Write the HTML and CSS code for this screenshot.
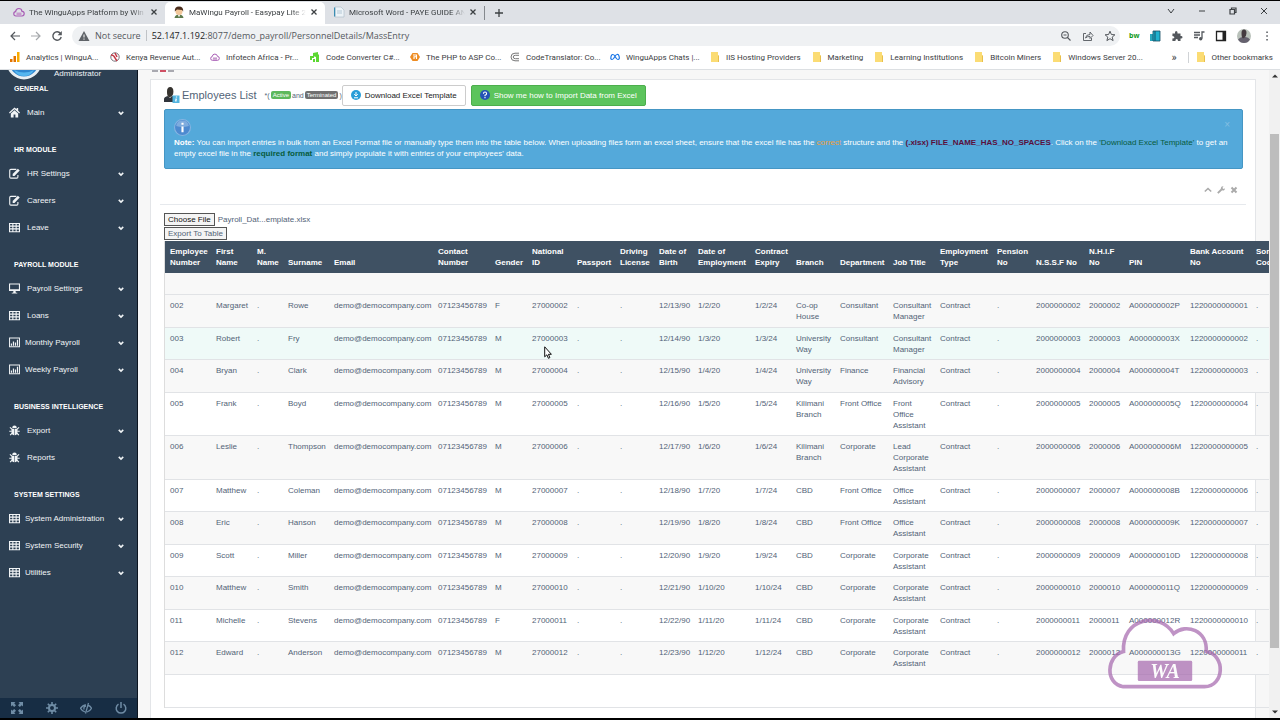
FILE: index.html
```html
<!DOCTYPE html>
<html lang="en">
<head>
  <meta charset="UTF-8" />
  <meta name="viewport" content="width=device-width, initial-scale=1" />
  <title>MaWingu Payroll - Easypay Lite</title>
  <link rel="stylesheet" href="styles.css">
</head>
<body>

<svg class="sprite" aria-hidden="true">
  <symbol id="chevron" viewBox="0 0 8 8"><path d="M1 2.500 4 5.500 7 2.500" fill="none" stroke="currentColor" stroke-width="2"/></symbol>
  <symbol id="home" viewBox="0 0 12 12"><path d="M6 .5 0 6l.9 1L6 2.500 11.100 7l.9-1-2-1.900V1H8.300v1.500zM2 7v4.500h3V8.200h2v3.300h3V7L6 3.500z" fill="currentColor"/></symbol>
  <symbol id="edit" viewBox="0 0 12 12"><path d="M8 1.500H2Q.8 1.500.8 2.700v7Q.8 11 2 11h6.500q1.200 0 1.200-1.200V7.500" fill="none" stroke="currentColor" stroke-width="1.200"/><path d="M4 8.600V6.500L9.700.8l2 2L6 8.600z" fill="currentColor"/></symbol>
  <symbol id="table" viewBox="0 0 12 12"><path d="M.6 1.600h10.800v9H.6zM.6 4.500h10.800M.6 7.500h10.800M4.200 2v8.600M7.800 2v8.600" fill="none" stroke="currentColor" stroke-width="1.200"/></symbol>
  <symbol id="desktop" viewBox="0 0 12 12"><path d="M.6 1.100h10.800v7H.6z" fill="none" stroke="currentColor" stroke-width="1.200"/><path d="M.6 6.800h10.800v1.500H.6zM5 8h2l.5 2.500H9v1H3v-1h1.500z" fill="currentColor"/></symbol>
  <symbol id="chart" viewBox="0 0 12 12"><path d="M.6 1.100h10.800v9.500H.6z" fill="none" stroke="currentColor" stroke-width="1.100"/><path d="M2 7h1.300v2.500H2zM4.200 5h1.300v4.500H4.200zM6.400 6h1.300v3.500H6.400zM8.600 3h1.300v6.500H8.600z" fill="currentColor"/></symbol>
  <symbol id="bug" viewBox="0 0 12 12"><path d="M3.500 3.200Q3.500.6 6 .6t2.500 2.600zM2.700 4h3v7.200Q2.700 11 2.700 8zM6.300 4h3v4q0 3-3 3.200z" fill="currentColor"/><path d="M1 2.500 3.200 4.500M11 2.500 8.800 4.500M.3 6.800H3M11.700 6.800H9M1.200 11 3.300 9M10.800 11 8.700 9" stroke="currentColor" stroke-width="1.200"/></symbol>
  <symbol id="cloud" viewBox="0 0 12 12"><path d="M3 10Q.8 10 .8 7.800T2.600 5.600Q3 2.500 5.800 2.500T9 5.300q2.200 0 2.200 2.300T9 10z" fill="none" stroke="#a85cb5" stroke-width="1.200"/><path d="M3.500 6.500h5v2.800h-5z" fill="#c79acd"/></symbol>
  <symbol id="folder" viewBox="0 0 10 10"><path d="M1 0h7v3l1 1v6H1z" fill="#fbdc74"/><path d="M8 3v7h1V4z" fill="#e8bf4c"/></symbol>
  <symbol id="close" viewBox="0 0 8 8"><path d="m1.500 1.500 5 5m0-5-5 5" stroke="currentColor" stroke-width="1.300"/></symbol>
</svg>

<div class="browser">

  <header class="tabs">
    <div class="tab">
      <svg class="fav"><use href="#cloud"/></svg>
      <span class="tab-title">The WinguApps Platform by Win</span>
      <button class="tab-close" aria-label="Close tab"><svg><use href="#close"/></svg></button>
    </div>
    <div class="tab active">
      <svg class="fav" viewBox="0 0 12 12"><path d="M1.500 12Q2 8.500 6 8.500t4.500 3.500z" fill="#5d7a4c"/><circle cx="6" cy="5.500" r="3.500" fill="#f2c79b"/><path d="M1.800 5.500Q1.500.5 6 .5t4.200 5L9 4 4 3.500z" fill="#4a2c1c"/><path d="m5 9 1 2.500L7 9z" fill="#fff"/></svg>
      <span class="tab-title">MaWingu Payroll - Easypay Lite 2</span>
      <button class="tab-close" aria-label="Close tab"><svg><use href="#close"/></svg></button>
    </div>
    <div class="tab">
      <svg class="fav" viewBox="0 0 12 12"><path d="M2 1h6l3 3v7H2z" fill="#edf3f7" stroke="#a8bac6" stroke-width=".6"/><path d="M1 1.500h1.200v9H1z" fill="#398db3"/><path d="M4 5h5M4 7h5" stroke="#9bb6c5" stroke-width=".7"/></svg>
      <span class="tab-title">Microsoft Word - PAYE GUIDE AN</span>
      <button class="tab-close" aria-label="Close tab"><svg><use href="#close"/></svg></button>
    </div>
    <button class="new-tab" aria-label="New tab"><svg viewBox="0 0 10 10"><path d="M5 1v8M1 5h8" stroke="currentColor" stroke-width="1.300"/></svg></button>
    <div class="window-buttons">
      <button aria-label="Search tabs"><svg viewBox="0 0 10 10"><path d="m2 3 3 4 3-4" fill="none" stroke="currentColor"/></svg></button>
      <button aria-label="Minimize"><svg viewBox="0 0 10 10"><path d="M2 5h6" stroke="currentColor"/></svg></button>
      <button aria-label="Restore"><svg viewBox="0 0 10 10"><path d="M2 3.500h4.500V8H2zM3.500 3V2H8v4.500H7" fill="none" stroke="currentColor" stroke-width="1.200"/></svg></button>
      <button aria-label="Close"><svg viewBox="0 0 10 10"><path d="m2 2 6 6m0-6L2 8" stroke="currentColor"/></svg></button>
    </div>
  </header>

  <div class="toolbar">
    <button aria-label="Back"><svg viewBox="0 0 12 12"><path d="M11 6H2M6 2 2 6l4 4" fill="none" stroke="currentColor" stroke-width="1.200"/></svg></button>
    <button class="dim" aria-label="Forward"><svg viewBox="0 0 12 12"><path d="M1 6h9M6 2l4 4-4 4" fill="none" stroke="currentColor" stroke-width="1.200"/></svg></button>
    <button aria-label="Reload"><svg viewBox="0 0 12 12"><path d="M9.500 3.500A4.200 4.200 0 1 0 10.200 7" fill="none" stroke="currentColor" stroke-width="1.400"/><path d="M10.800 1v4.200H6.600z" fill="currentColor"/></svg></button>
    <div class="omnibox">
      <svg class="warn" viewBox="0 0 12 12"><path d="M6 1 11.500 11H.5z" fill="#5f6368"/><path d="M6 4.500v3M6 8.500v1.200" stroke="#fff"/></svg>
      <span class="not-secure">Not secure</span>
      <span class="url"><b>52.147.1.192</b>:8077/demo_payroll/PersonnelDetails/MassEntry</span>
      <div class="omni-actions">
        <svg viewBox="0 0 12 12"><circle cx="5" cy="5" r="3.300" fill="none" stroke="currentColor" stroke-width="1.100"/><path d="m7.500 7.500 3 3M3.500 5h3" stroke="currentColor" stroke-width="1.100"/></svg>
        <svg viewBox="0 0 12 12"><path d="M4 3.500H1.500v7h8V8M3.500 8Q4 4.500 8 4.500V2l3 3.500-3 3v-2Q5 6.300 3.500 8z" fill="none" stroke="currentColor" stroke-width=".9"/></svg>
        <svg viewBox="0 0 12 12"><path d="m6 1.200 1.400 3.300 3.500.3-2.700 2.300.9 3.500L6 8.700l-3.100 1.900.9-3.500L1.100 4.800l3.500-.3z" fill="none" stroke="currentColor"/></svg>
      </div>
    </div>
    <div class="extensions">
      <span class="bw">bw</span>
      <svg viewBox="0 0 12 12"><path d="M1 4h4v7H1z" fill="#2aa7bd"/><path d="M4 1h7v10H4z" fill="#20b1ce" stroke="#174c62" stroke-width=".8"/><path d="M6 1v10" stroke="#134f66"/></svg>
      <svg viewBox="0 0 12 12"><path d="M1.500 3.500H4Q3.500 1 5.200 1T6.500 3.500h3V6q2-.3 2 1.200T9.500 8.500V11H7Q7 9 5.700 9T4.400 11h-3V8.500q2-.1 2-1.300t-2-1.300z" fill="currentColor"/></svg>
      <svg viewBox="0 0 12 12"><path d="M1 2.500h6M1 5h6M1 7.500h4M9 8.500V2h2.500" fill="none" stroke="currentColor" stroke-width="1.300"/><circle cx="7.700" cy="8.700" r="1.700" fill="currentColor"/></svg>
      <svg viewBox="0 0 12 12"><path d="M1.500 1.500h9v9h-9z" fill="none" stroke="#222" stroke-width="1.300"/><path d="M7.500 1.500h3v9h-3z" fill="#222"/></svg>
      <svg class="account" viewBox="0 0 14 14"><circle cx="7" cy="7" r="7" fill="#b9c1ba"/><path d="M1 10.500Q3 8 5.500 8h3q3 0 4.500 2.500-2 3.500-6 3.500t-6-3.500z" fill="#65616e"/><path d="M4.500 4q0-3.500 2.500-3.500T9.500 4 7 9 4.500 4z" fill="#443a3f"/></svg>
      <svg viewBox="0 0 12 12"><path d="M5.300 1.500h1.500V3H5.300zM5.300 5.200h1.500v1.500H5.300zM5.300 9h1.500v1.500H5.300z" fill="currentColor"/></svg>
    </div>
  </div>

  <nav class="bookmarks">
    <a href="#" class="site"><svg viewBox="0 0 10 10"><path d="M0 7h2.500v3H0z" fill="#e37400"/><path d="M3.500 4H6v6H3.500z" fill="#e37400"/><path d="M7 0h2.500v10H7z" fill="#f9ab00"/></svg>Analytics | WinguA...</a>
    <a href="#" class="site"><svg viewBox="0 0 10 10"><circle cx="5" cy="5" r="4.200" fill="#fff" stroke="#77747c"/><path d="M1 3q3 0 4 3l2 3M5 1l2 4" fill="none" stroke="#c23a46" stroke-width="1.500"/></svg>Kenya Revenue Aut...</a>
    <a href="#" class="site"><svg><use href="#cloud"/></svg>Infotech Africa - Pr...</a>
    <a href="#" class="site"><svg viewBox="0 0 10 10"><path d="M0 4h4v2H2v2H0zM3 1l5-1v2l1 1v7H6V5L3 4z" fill="#5cd832"/><path d="M3 7h2v3H3z" fill="#5cd832"/></svg>Code Converter C#...</a>
    <a href="#" class="site"><svg viewBox="0 0 10 10"><path d="M2.500 1h5L10 5 7.500 9h-5L0 5z" fill="#ee8c22"/><path d="M3 3h3.500v1.700H4V7M6.500 5v2" fill="none" stroke="#fff" stroke-width="1.100"/></svg>The PHP to ASP Co...</a>
    <a href="#" class="site"><svg viewBox="0 0 10 10"><path d="M9 1.200H5Q1 1.200 1 5t4 3.800h4M9 3.300H5.500Q3.200 3.300 3.200 5t2.300 1.700H9" fill="none" stroke="#777"/></svg>CodeTranslator: Co...</a>
    <a href="#" class="site"><svg viewBox="0 0 12 10"><path d="M1 7.500Q.8 2 3.500 2 5 2 6.500 5T9.500 8q2.300 0 1.500-3.500T8.500 2Q7 2 5.500 5T2.500 8Q1.200 8 1 7" fill="none" stroke="#1673e6" stroke-width="1.400"/></svg>WinguApps Chats |...</a>
    <a href="#"><svg><use href="#folder"/></svg>IIS Hosting Providers</a>
    <a href="#"><svg><use href="#folder"/></svg>Marketing</a>
    <a href="#"><svg><use href="#folder"/></svg>Learning Institutions</a>
    <a href="#"><svg><use href="#folder"/></svg>Bitcoin Miners</a>
    <a href="#"><svg><use href="#folder"/></svg>Windows Server 20...</a>
    <button class="more">»</button>
    <a href="#" class="other"><svg><use href="#folder"/></svg>Other bookmarks</a>
  </nav>

  <div class="page">

    <aside class="sidebar">
      <div class="profile">
        <svg viewBox="0 0 34 12"><circle cx="17" cy="-8" r="16" fill="#2f86cf" stroke="#e9eff3" stroke-width="3"/><path d="M7 0q10 5 20 0-3 6-10 6T7 0z" fill="#55b6ef"/></svg>
        <span>Administrator</span>
      </div>
      <div class="menu">
        <h3>GENERAL</h3>
        <a href="#"><svg><use href="#home"/></svg>Main<svg class="arrow"><use href="#chevron"/></svg></a>
      </div>
      <div class="menu">
        <h3>HR MODULE</h3>
        <a href="#"><svg><use href="#edit"/></svg>HR Settings<svg class="arrow"><use href="#chevron"/></svg></a>
        <a href="#"><svg><use href="#edit"/></svg>Careers<svg class="arrow"><use href="#chevron"/></svg></a>
        <a href="#"><svg><use href="#table"/></svg>Leave<svg class="arrow"><use href="#chevron"/></svg></a>
      </div>
      <div class="menu">
        <h3>PAYROLL MODULE</h3>
        <a href="#"><svg><use href="#desktop"/></svg>Payroll Settings<svg class="arrow"><use href="#chevron"/></svg></a>
        <a href="#"><svg><use href="#table"/></svg>Loans<svg class="arrow"><use href="#chevron"/></svg></a>
        <a href="#" class="tight"><svg><use href="#chart"/></svg>Monthly Payroll<svg class="arrow"><use href="#chevron"/></svg></a>
        <a href="#" class="tight"><svg><use href="#chart"/></svg>Weekly Payroll<svg class="arrow"><use href="#chevron"/></svg></a>
      </div>
      <div class="menu">
        <h3>BUSINESS INTELLIGENCE</h3>
        <a href="#"><svg><use href="#bug"/></svg>Export<svg class="arrow"><use href="#chevron"/></svg></a>
        <a href="#"><svg><use href="#bug"/></svg>Reports<svg class="arrow"><use href="#chevron"/></svg></a>
      </div>
      <div class="menu">
        <h3>SYSTEM SETTINGS</h3>
        <a href="#" class="tight"><svg><use href="#table"/></svg>System Administration<svg class="arrow"><use href="#chevron"/></svg></a>
        <a href="#" class="tight"><svg><use href="#table"/></svg>System Security<svg class="arrow"><use href="#chevron"/></svg></a>
        <a href="#" class="tight"><svg><use href="#table"/></svg>Utilities<svg class="arrow"><use href="#chevron"/></svg></a>
      </div>
      <div class="sidebar-footer">
        <button aria-label="Full screen"><svg viewBox="0 0 12 12"><path d="M0 0h4.500L3.200 1.300 5 3.200 3.200 5 1.300 3.200 0 4.500zM12 0v4.500l-1.300-1.300L8.800 5 7 3.200l1.800-1.900L7.500 0zM0 12V7.500l1.300 1.300L3.200 7 5 8.800l-1.800 1.900L4.500 12zM12 12H7.500l1.300-1.300L7 8.800 8.800 7l1.900 1.800L12 7.500z" fill="currentColor"/></svg></button>
        <button aria-label="Settings"><svg viewBox="0 0 12 12"><circle cx="6" cy="6" r="3" fill="none" stroke="currentColor" stroke-width="2"/><path d="M6 0v3M6 9v3M0 6h3M9 6h3M1.800 1.800l2 2M8.200 8.200l2 2M10.200 1.800l-2 2M3.800 8.200l-2 2" stroke="currentColor" stroke-width="1.600"/></svg></button>
        <button aria-label="Hide"><svg viewBox="0 0 12 12"><path d="M5 10Q2 9 .5 6.300 2.500 3 6 2.800M8 3.200q2.500 1 3.500 3Q10 9 7 10M8.500 1 5.500 11.500M6 4q-2.500 0-2 3.500" fill="none" stroke="currentColor" stroke-width="1.300"/></svg></button>
        <button aria-label="Logout"><svg viewBox="0 0 12 12"><path d="M3.500 2.200a4.800 4.800 0 1 0 5 0M6 0v6" fill="none" stroke="currentColor" stroke-width="1.500"/></svg></button>
      </div>
    </aside>

    <main class="content">
      <div class="crumb"><i></i><i class="red"></i><i></i></div>
      <section class="panel">
        <div class="title-row">
          <svg class="user-icon" viewBox="0 0 16 16"><path d="M0 15V12q0-2 4-3l2 2 2-2q4 1 4 3v3z" fill="#30343b"/><path d="M3 4.500Q3 0 6.200 0t3.200 4.500T6.200 10 3 4.500z" fill="#36332f"/><path d="M8.500 8.500h7V16h-7z" fill="#53b4df"/><path d="M12.500 9.500v1M12.300 11.500l-.6 3" stroke="#fff" stroke-width="1.300"/></svg>
          <h2>Employees List</h2>
          <small>*(<span class="badge green">Active</span> and <span class="badge grey">Terminated</span>)</small>
          <button class="btn"><svg viewBox="0 0 10 10"><circle cx="5" cy="5" r="5" fill="#299dd8"/><path d="M5 2v3M3.200 4.200 5 6l1.800-1.800M3 7.800h4" fill="none" stroke="#fff"/></svg>Download Excel Template</button>
          <button class="btn btn-success"><svg viewBox="0 0 10 10"><circle cx="5" cy="5" r="5" fill="#2453b5"/><path d="M3.400 3.700Q3.500 2 5 2t1.600 1.500T5 5.300v.9M5 7v1.200" fill="none" stroke="#fff" stroke-width="1.100"/></svg>Show me how to Import Data from Excel</button>
        </div>

        <div class="alert">
          <button class="dismiss" aria-label="Close">×</button>
          <svg class="info" viewBox="0 0 16 16"><circle cx="8" cy="8" r="7.500" fill="#4d8ad0" stroke="#86b5e2"/><path d="M2 6.500Q3 1.500 8 1.500t6 5q-6 2-12 0z" fill="#7facde"/><path d="M7 7h2v5.500H7zM7 3.500h2v2H7z" fill="#fff"/></svg>
          <p><strong>Note:</strong> You can import entries in bulk from an Excel Format file or manually type them into the table below. When uploading files form an excel sheet, ensure that the excel file has the <span class="orange">correct</span> structure and the <b class="maroon">(.xlsx) FILE_NAME_HAS_NO_SPACES</b>. Click on the <span class="green-text">'Download Excel Template'</span> to get an empty excel file in the <b class="green-text">required format</b> and simply populate it with entries of your employees' data.</p>
        </div>

        <div class="toolbox">
          <button aria-label="Collapse"><svg viewBox="0 0 8 8"><path d="M.8 5.500 4 2.500l3.200 3" fill="none" stroke="currentColor" stroke-width="1.600"/></svg></button>
          <button aria-label="Options"><svg viewBox="0 0 8 8"><path d="M.8 7.200 4.500 3.500" stroke="currentColor" stroke-width="1.800"/><path d="M6.500.3Q4 0 3.800 2.500t3 2Q8 4 7.800 2.300L6.500 3 5.400 2z" fill="currentColor"/></svg></button>
          <button aria-label="Close"><svg viewBox="0 0 8 8"><path d="m1.500 1.500 5 5m0-5-5 5" stroke="currentColor" stroke-width="2"/></svg></button>
        </div>

        <form class="upload" onsubmit="return false">
          <div class="file-row">
            <button type="button" class="choose" id="chooseFile">Choose File</button>
            <label for="chooseFile">Payroll_Dat...emplate.xlsx</label>
          </div>
          <button type="button" class="export">Export To Table</button>
        </form>

        <table class="employees">
          <colgroup id="employeesCols"></colgroup>
          <thead><tr id="employeesHead"></tr></thead>
          <tbody id="employeesBody"></tbody>
        </table>
      </section>

      <svg class="watermark" viewBox="82 48 348 220">
        <path d="M130 258H375C435 258 440 162 380 152 385 90 320 65 282 98 240 30 125 50 131 152 78 165 75 250 130 258z" fill="none" stroke="#a566ad" stroke-width="11"/>
        <rect x="174" y="180" width="164" height="61" rx="4" fill="#a566ad"/>
        <text x="256" y="231" text-anchor="middle">WA</text>
      </svg>
    </main>

    <div class="scrollbar">
      <svg viewBox="0 0 8 8"><path d="m1 5.500 3-3 3 3z"/></svg>
      <div class="thumb"></div>
      <svg viewBox="0 0 8 8"><path d="m1 2.500 3 3 3-3z"/></svg>
    </div>
  </div>
</div>

<svg class="pointer" viewBox="0 0 8 13"><path d="M.7.8v10l2.200-2 1.500 3.500 1.500-.7-1.500-3.300h3z" fill="#fff" stroke="#111"/></svg>

<script>
  const columns = [
    ['Employee Number', 46], ['First Name', 41], ['M. Name', 31], ['Surname', 46], ['Email', 104],
    ['Contact Number', 57], ['Gender', 37], ['National ID', 45], ['Passport', 43], ['Driving License', 39],
    ['Date of Birth', 39], ['Date of Employment', 57], ['Contract Expiry', 41], ['Branch', 44],
    ['Department', 53], ['Job Title', 47], ['Employment Type', 57], ['Pension No', 39], ['N.S.S.F No', 53],
    ['N.H.I.F No', 40], ['PIN', 61], ['Bank Account No', 66], ['Sort Code', 40]
  ];

  const employees = [
    ['Margaret', 'Rowe', 'F', 'Co-op House', 'Consultant', 'Consultant Manager', 'P'],
    ['Robert', 'Fry', 'M', 'University Way', 'Consultant', 'Consultant Manager', 'X'],
    ['Bryan', 'Clark', 'M', 'University Way', 'Finance', 'Financial Advisory', 'T'],
    ['Frank', 'Boyd', 'M', 'Kilimani Branch', 'Front Office', 'Front Office Assistant', 'Q'],
    ['Leslie', 'Thompson', 'M', 'Kilimani Branch', 'Corporate', 'Lead Corporate Assistant', 'M'],
    ['Matthew', 'Coleman', 'M', 'CBD', 'Front Office', 'Office Assistant', 'B'],
    ['Eric', 'Hanson', 'M', 'CBD', 'Front Office', 'Office Assistant', 'K'],
    ['Scott', 'Miller', 'M', 'CBD', 'Corporate', 'Corporate Assistant', 'D'],
    ['Matthew', 'Smith', 'M', 'CBD', 'Corporate', 'Corporate Assistant', 'Q'],
    ['Michelle', 'Stevens', 'F', 'CBD', 'Corporate', 'Corporate Assistant', 'R'],
    ['Edward', 'Anderson', 'M', 'CBD', 'Corporate', 'Corporate Assistant', 'G']
  ];

  const twoDigits = n => String(n).padStart(2, '0');

  document.getElementById('employeesCols').innerHTML = columns.map(c => `<col style="width:${c[1]}px">`).join('');
  document.getElementById('employeesHead').innerHTML = columns.map(c => `<th>${c[0]}</th>`).join('');

  const tbody = document.getElementById('employeesBody');
  tbody.innerHTML = `<tr class="blank"><td colspan="${columns.length}"></td></tr>`;

  employees.forEach((e, i) => {
    const n = i + 2;
    const no = twoDigits(n);
    // PIN numbers skip 007
    const pin = twoDigits(n > 6 ? n + 1 : n);
    const cells = [
      '0' + no, e[0], '.', e[1], 'demo@democompany.com', '07123456789', e[2], '270000' + no, '.', '.',
      `12/${n + 11}/90`, `1/${n}/20`, `1/${n}/24`, e[3], e[4], e[5], 'Contract', '.',
      '20000000' + no, '20000' + no, 'A0000000' + pin + e[6], '12200000000' + twoDigits(n - 1), '.'
    ];
    const tr = document.createElement('tr');
    if (n === 3) tr.className = 'hovered';
    tr.innerHTML = cells.map(c => `<td>${c}</td>`).join('');
    tbody.appendChild(tr);
  });
  tbody.insertAdjacentHTML('beforeend', `<tr class="last"><td colspan="${columns.length}"></td></tr>`);
</script>

</body>
</html>
```

FILE: styles.css
```css
* {
  box-sizing: border-box;
}
body {
  margin: 0;
  font-family: "Liberation Sans", Arial, sans-serif;
  font-size: 8px;
  line-height: 11px;
  color: #526377;
  background: #000;
}
button {
  margin: 0;
  padding: 0;
  border: 0;
  background: none;
  font: inherit;
  color: inherit;
  cursor: pointer;
}
a {
  color: inherit;
  text-decoration: none;
}
svg {
  display: block;
  flex: none;
}
.sprite {
  position: absolute;
  width: 0;
  height: 0;
}
.browser {
  display: flex;
  flex-direction: column;
  height: 100vh;
  padding: 1px 0 2px;
}

/* browser chrome */
.tabs {
  display: flex;
  align-items: flex-end;
  height: 23px;
  flex: none;
  background: #dee1e6;
  font-family: Roboto, "Noto Sans", sans-serif;
  color: #3c4043;
}
.tab {
  display: flex;
  align-items: center;
  width: 160px;
  height: 22px;
  padding: 0 7px 2px 8px;
  gap: 4px;
}
.tab:first-child {
  width: 165px;
  padding-left: 13px;
}
.tab:nth-child(3) {
  border-right: 1px solid transparent;
  border-image: linear-gradient(transparent 20%, #85898e 20%, #85898e 80%, transparent 80%) 1;
}
.tab.active {
  background: #fff;
  border-radius: 5px 5px 0 0;
}
.fav {
  width: 12px;
  height: 12px;
}
.tab-title {
  flex: 1;
  overflow: hidden;
  white-space: nowrap;
  -webkit-mask-image: linear-gradient(90deg, #000 88%, transparent);
  mask-image: linear-gradient(90deg, #000 88%, transparent);
}
.tab-close svg {
  width: 8px;
  height: 8px;
}
.new-tab {
  align-self: center;
  margin-left: 9px;
}
.new-tab svg,
.window-buttons svg {
  width: 10px;
  height: 10px;
}
.window-buttons {
  display: flex;
  align-self: center;
  gap: 21px;
  margin-left: auto;
  padding: 0 11px 3px 0;
}
.toolbar {
  display: flex;
  align-items: center;
  gap: 9px;
  height: 23px;
  flex: none;
  padding: 0 7px 0 9px;
  background: #fff;
  color: #54585d;
  font-family: "Open Sans", "Noto Sans", sans-serif;
  font-size: 9px;
}
.toolbar svg {
  width: 12px;
  height: 12px;
}
.toolbar .dim {
  color: #a5a8ab;
}
.omnibox {
  display: flex;
  flex: 1;
  align-items: center;
  gap: 5px;
  height: 20px;
  padding: 0 4px 0 6px;
  border-radius: 10px;
  background: #eff1f3;
}
.not-secure {
  padding-right: 5px;
  border-right: 1px solid #c0c3c7;
}
.url b {
  font-weight: normal;
  color: #202124;
}
.omni-actions {
  display: flex;
  gap: 10px;
  margin-left: auto;
}
.extensions {
  display: flex;
  align-items: center;
  gap: 10px;
}
.extensions .account {
  width: 14px;
  height: 14px;
}
.bw {
  width: 10px;
  font-weight: bold;
  font-size: 7px;
  color: #129a18;
}
.bookmarks {
  display: flex;
  align-items: center;
  gap: 11px;
  height: 23px;
  flex: none;
  padding: 0 7px 2px 10px;
  border-bottom: 1px solid #dcdfe2;
  background: #fff;
  color: #3c4043;
  font-family: Roboto, "Noto Sans", sans-serif;
  white-space: nowrap;
}
.bookmarks a {
  display: flex;
  align-items: center;
  gap: 6px;
}
.bookmarks .site {
  width: 89px;
}
.bookmarks svg {
  width: 10px;
  height: 10px;
}
.bookmarks .more {
  margin-left: auto;
  font-size: 11px;
}
.bookmarks .other {
  padding-left: 7px;
  border-left: 1px solid #d0d3d6;
}

/* page */
.page {
  display: flex;
  flex: 1;
  min-height: 0;
  background: #f7f7f7;
}
.sidebar {
  display: flex;
  flex-direction: column;
  width: 138px;
  flex: none;
  overflow: hidden;
  border-right: 1px solid #0c1520;
  background: #2d4053;
  color: #f1f4f6;
}
.profile {
  display: flex;
  height: 13px;
  padding-left: 7px;
  gap: 13px;
  line-height: 8px;
}
.profile svg {
  width: 34px;
  height: 12px;
}
.menu {
  margin-bottom: 18px;
}
.menu h3 {
  margin: 0 0 4px;
  padding-left: 14px;
  font-size: 7px;
  line-height: 12px;
  color: #fff;
}
.menu a {
  display: flex;
  align-items: center;
  gap: 7px;
  height: 27px;
  padding: 0 13px 0 9px;
}
.menu a.tight {
  gap: 5px;
}
.menu svg {
  width: 11px;
  height: 11px;
}
.menu .arrow {
  width: 6px;
  height: 6px;
  margin-left: auto;
}
.sidebar-footer {
  display: flex;
  align-items: center;
  justify-content: space-between;
  height: 20px;
  margin-top: auto;
  padding: 0 10px 0 11px;
  background: #172d44;
  color: #6f8ca5;
}
.sidebar-footer svg {
  width: 12px;
  height: 12px;
}
.content {
  position: relative;
  flex: 1;
  min-width: 0;
  overflow: hidden;
  padding: 0 13px 0 12px;
}
.crumb {
  display: flex;
  gap: 2px;
  height: 9px;
  padding-left: 2px;
}
.crumb i {
  width: 6px;
  height: 2px;
  background: #a9a9b0;
}
.crumb .red {
  background: #cf5064;
}
.panel {
  height: 100%;
  padding: 4px 12px 0 13px;
  border: 1px solid #e3e5e8;
  background: #fff;
}
.title-row {
  display: flex;
  align-items: center;
  height: 22px;
}
.user-icon {
  width: 16px;
  height: 16px;
}
h2 {
  margin: 0 8px 0 2px;
  font-size: 11px;
  line-height: 14px;
  font-weight: normal;
}
.title-row small {
  display: flex;
  align-items: center;
  gap: 1px;
  font-size: 7px;
}
.badge {
  padding: 0 2px;
  border-radius: 2px;
  line-height: 8px;
  font-size: 6px;
  color: #fff;
}
.badge.green {
  background: #5cb85c;
}
.badge.grey {
  background: #707070;
}
.btn {
  display: flex;
  align-items: center;
  gap: 4px;
  height: 21px;
  margin-right: 5px;
  padding: 0 8px;
  border: 1px solid #ccc;
  border-radius: 2px;
  background: #fff;
  color: #222;
}
.btn svg {
  width: 10px;
  height: 10px;
}
.btn-success {
  border-color: #4cae4c;
  background: #5cc45c;
  color: #fff;
}
.alert {
  position: relative;
  margin-top: 3px;
  padding: 9px;
  border: 1px solid #4596c4;
  border-radius: 2px;
  background: #54a9da;
  color: #fff;
}
.alert p {
  margin: 0;
}
.info {
  width: 17px;
  height: 17px;
  margin-bottom: 1px;
}
.dismiss {
  position: absolute;
  top: 9px;
  right: 12px;
  font-size: 10px;
  color: #83bfe2;
}
.orange {
  color: #f0a03c;
}
.maroon {
  color: #5a0f3c;
}
.green-text {
  color: #085b3c;
}
.toolbox {
  display: flex;
  align-items: center;
  justify-content: flex-end;
  gap: 5px;
  height: 36px;
  margin: 0 -3px 0 -4px;
  padding: 7px 8px 0 0;
  border-bottom: 1px solid #e6e9ed;
  color: #aaa;
}
.toolbox svg {
  width: 8px;
  height: 8px;
}
.upload {
  padding: 8px 0 1px;
}
.file-row {
  display: flex;
  gap: 3px;
  align-items: center;
  margin-bottom: 1px;
}
.choose,
.export {
  display: block;
  height: 13px;
  padding: 0 3px;
  border: 1px solid #555;
  background: #f4f4f4;
}
.choose {
  color: #111;
}
.employees {
  width: 1126px;
  border-collapse: separate;
  border-spacing: 0;
  border-left: 1px solid #ddd;
  table-layout: fixed;
}
.employees th,
.employees td {
  padding: 5px;
  text-align: left;
  vertical-align: top;
}
.employees th {
  vertical-align: bottom;
  background: #3f5163;
  color: #fff;
}
.employees td {
  border-bottom: 1px solid #e1e3e6;
}
.employees tbody tr:nth-child(odd) td {
  padding-bottom: 4px;
}
.employees tbody tr:nth-child(even) {
  background: #f8f8f8;
}
.employees tbody .blank {
  height: 22px;
  background: #f8f8f8;
}
.employees tbody .hovered {
  background: #effaf8;
}
.employees tbody .last {
  height: 33px;
  background: none;
}
.watermark {
  position: absolute;
  right: 46px;
  bottom: 28px;
  width: 116px;
  height: 73px;
  opacity: 0.7;
}
.watermark text {
  font: italic bold 60px "Liberation Serif", serif;
  fill: #fff;
}
.scrollbar {
  display: flex;
  flex-direction: column;
  align-items: center;
  width: 11px;
  padding: 2px 0;
  background: #f1f1f1;
}
.scrollbar svg {
  width: 8px;
  height: 8px;
  fill: #333;
}
.thumb {
  flex: 1;
  width: 9px;
  margin: 54px 0 60px;
  background: #bdbdbd;
}
.pointer {
  position: absolute;
  left: 544px;
  top: 346px;
  width: 8px;
  height: 13px;
}
```
